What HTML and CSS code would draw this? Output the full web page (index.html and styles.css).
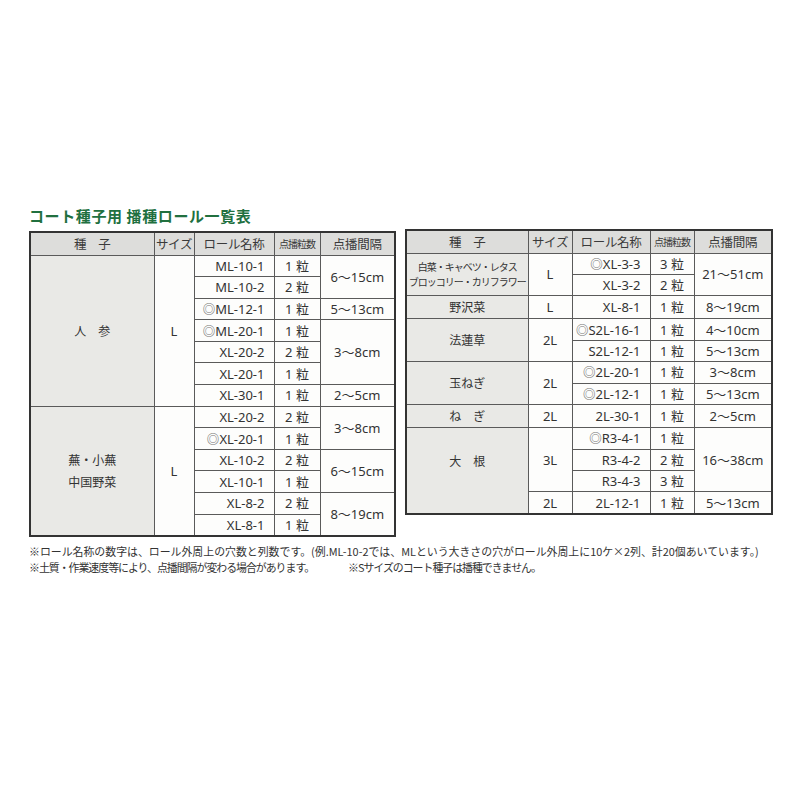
FILE: index.html
```html
<!DOCTYPE html>
<html lang="ja">
<head>
<meta charset="utf-8">
<title>コート種子用 播種ロール一覧表</title>
<link rel="stylesheet" href="styles.css">
</head>
<body>
<div class="page">
  <h1 class="title">コート種子用 播種ロール一覧表</h1>
  <div class="tables">
    <table class="tbl tbl-left">
      <colgroup>
        <col class="c1"><col class="c2"><col class="c3"><col class="c4"><col class="c5">
      </colgroup>
      <thead>
        <tr>
          <th>種　子</th><th>サイズ</th><th>ロール名称</th><th class="narrow">点播粒数</th><th>点播間隔</th>
        </tr>
      </thead>
      <tbody>
        <tr>
          <td class="seed" rowspan="7">人　参</td><td class="size" rowspan="7">L</td>
          <td class="roll">ML-10-1</td><td>1 粒</td><td rowspan="2">6〜15cm</td>
        </tr>
        <tr><td class="roll">ML-10-2</td><td>2 粒</td></tr>
        <tr><td class="roll"><span class="mk">◎</span>ML-12-1</td><td>1 粒</td><td>5〜13cm</td></tr>
        <tr><td class="roll"><span class="mk">◎</span>ML-20-1</td><td>1 粒</td><td rowspan="3">3〜8cm</td></tr>
        <tr><td class="roll">XL-20-2</td><td>2 粒</td></tr>
        <tr><td class="roll">XL-20-1</td><td>1 粒</td></tr>
        <tr><td class="roll">XL-30-1</td><td>1 粒</td><td>2〜5cm</td></tr>
        <tr>
          <td class="seed seed-two" rowspan="6">蕪・小蕪<br>中国野菜</td><td class="size" rowspan="6">L</td>
          <td class="roll">XL-20-2</td><td>2 粒</td><td rowspan="2">3〜8cm</td>
        </tr>
        <tr><td class="roll"><span class="mk">◎</span>XL-20-1</td><td>1 粒</td></tr>
        <tr><td class="roll">XL-10-2</td><td>2 粒</td><td rowspan="2">6〜15cm</td></tr>
        <tr><td class="roll">XL-10-1</td><td>1 粒</td></tr>
        <tr><td class="roll">XL-8-2</td><td>2 粒</td><td rowspan="2">8〜19cm</td></tr>
        <tr><td class="roll">XL-8-1</td><td>1 粒</td></tr>
      </tbody>
    </table>

    <table class="tbl tbl-right">
      <colgroup>
        <col class="d1"><col class="d2"><col class="d3"><col class="d4"><col class="d5">
      </colgroup>
      <thead>
        <tr>
          <th>種　子</th><th>サイズ</th><th>ロール名称</th><th class="narrow">点播粒数</th><th>点播間隔</th>
        </tr>
      </thead>
      <tbody>
        <tr>
          <td class="seed seed-small" rowspan="2">白菜・キャベツ・レタス<br>ブロッコリー・カリフラワー</td><td class="size" rowspan="2">L</td>
          <td class="roll"><span class="mk">◎</span>XL-3-3</td><td>3 粒</td><td rowspan="2">21〜51cm</td>
        </tr>
        <tr><td class="roll">XL-3-2</td><td>2 粒</td></tr>
        <tr><td class="seed">野沢菜</td><td class="size">L</td><td class="roll">XL-8-1</td><td>1 粒</td><td>8〜19cm</td></tr>
        <tr>
          <td class="seed" rowspan="2">法蓮草</td><td class="size" rowspan="2">2L</td>
          <td class="roll"><span class="mk">◎</span>S2L-16-1</td><td>1 粒</td><td>4〜10cm</td>
        </tr>
        <tr><td class="roll">S2L-12-1</td><td>1 粒</td><td>5〜13cm</td></tr>
        <tr>
          <td class="seed" rowspan="2">玉ねぎ</td><td class="size" rowspan="2">2L</td>
          <td class="roll"><span class="mk">◎</span>2L-20-1</td><td>1 粒</td><td>3〜8cm</td>
        </tr>
        <tr><td class="roll"><span class="mk">◎</span>2L-12-1</td><td>1 粒</td><td>5〜13cm</td></tr>
        <tr><td class="seed">ね　ぎ</td><td class="size">2L</td><td class="roll">2L-30-1</td><td>1 粒</td><td>2〜5cm</td></tr>
        <tr>
          <td class="seed seed-up" rowspan="4">大　根</td><td class="size" rowspan="3">3L</td>
          <td class="roll"><span class="mk">◎</span>R3-4-1</td><td>1 粒</td><td rowspan="3">16〜38cm</td>
        </tr>
        <tr><td class="roll">R3-4-2</td><td>2 粒</td></tr>
        <tr><td class="roll">R3-4-3</td><td>3 粒</td></tr>
        <tr><td class="size">2L</td><td class="roll">2L-12-1</td><td>1 粒</td><td>5〜13cm</td></tr>
      </tbody>
    </table>
  </div>
  <div class="notes">
    <p class="note">※ロール名称の数字は、ロール外周上の穴数と列数です。(例.ML-10-2では、MLという大きさの穴がロール外周上に10ケ×2列、計20個あいています。)</p>
    <p class="note note-tight">※土質・作業速度等により、点播間隔が変わる場合があります。<span class="note-gap">※Sサイズのコート種子は播種できません。</span></p>
  </div>
</div>
</body>
</html>
```

FILE: styles.css
```css
html, body {
  margin: 0;
  padding: 0;
  background: #ffffff;
}

body {
  font-family: "Noto Sans", "Noto Sans CJK JP", sans-serif;
  color: #333333;
}

.page {
  padding: 206px 0 0 29px;
}

.title {
  margin: 0 0 3px 0;
  font-family: "Noto Sans CJK JP", sans-serif;
  font-size: 15px;
  line-height: 20px;
  font-weight: 700;
  letter-spacing: 0.6px;
  color: #21703f;
}

.tables {
  display: flex;
  align-items: flex-start;
  gap: 9px;
}

.tbl {
  border-collapse: collapse;
  table-layout: fixed;
  border: 2px solid #333333;
  background: #fdfdfc;
}

.tbl-left {
  width: 365px;
  margin-top: 2px;
}

.tbl-right {
  width: 366px;
}

.c1 { width: 124px; }
.c2 { width: 40px; }
.c3 { width: 80px; }
.c4 { width: 46px; }
.c5 { width: 75px; }

.d1 { width: 122px; }
.d2 { width: 44px; }
.d3 { width: 78px; }
.d4 { width: 44px; }
.d5 { width: 78px; }

.tbl th,
.tbl td {
  border: 1px solid #5a5a5a;
  padding: 0;
  text-align: center;
  vertical-align: middle;
  white-space: nowrap;
  overflow: hidden;
}

.tbl th {
  height: 21.5px;
  background: #dddddb;
  font-family: "Noto Sans CJK JP", sans-serif;
  font-weight: 400;
  font-size: 12.5px;
  line-height: 16px;
  color: #3a3a3a;
  letter-spacing: -0.3px;
}

.tbl th.narrow {
  font-size: 10px;
  letter-spacing: -1px;
}

.tbl td {
  height: 20.6px;
  font-size: 13px;
  line-height: 16px;
  color: #333333;
}

.tbl-right td {
  height: 20.45px;
}

.tbl td.seed {
  background: #e9e9e6;
  font-family: "Noto Sans CJK JP", sans-serif;
  font-size: 12px;
  line-height: 22px;
}

.tbl td.seed-small {
  font-size: 10px;
  line-height: 15px;
  letter-spacing: -1px;
}

.tbl td.seed-up {
  padding-bottom: 20px;
}

.tbl td.size {
  background: #fdfdfc;
}

.tbl td.roll {
  text-align: right;
  padding-right: 9px;
}

.mk {
  font-family: "Noto Sans CJK JP", sans-serif;
  font-weight: 700;
  color: #777777;
  font-size: 12.5px;
}

.notes {
  margin-top: 6px;
}

.note {
  margin: 0;
  font-family: "Noto Sans CJK JP", sans-serif;
  font-size: 10.9px;
  line-height: 16px;
  color: #333333;
  white-space: nowrap;
}

.note-tight {
  letter-spacing: -1px;
}

.note-gap {
  margin-left: 34px;
}
```
